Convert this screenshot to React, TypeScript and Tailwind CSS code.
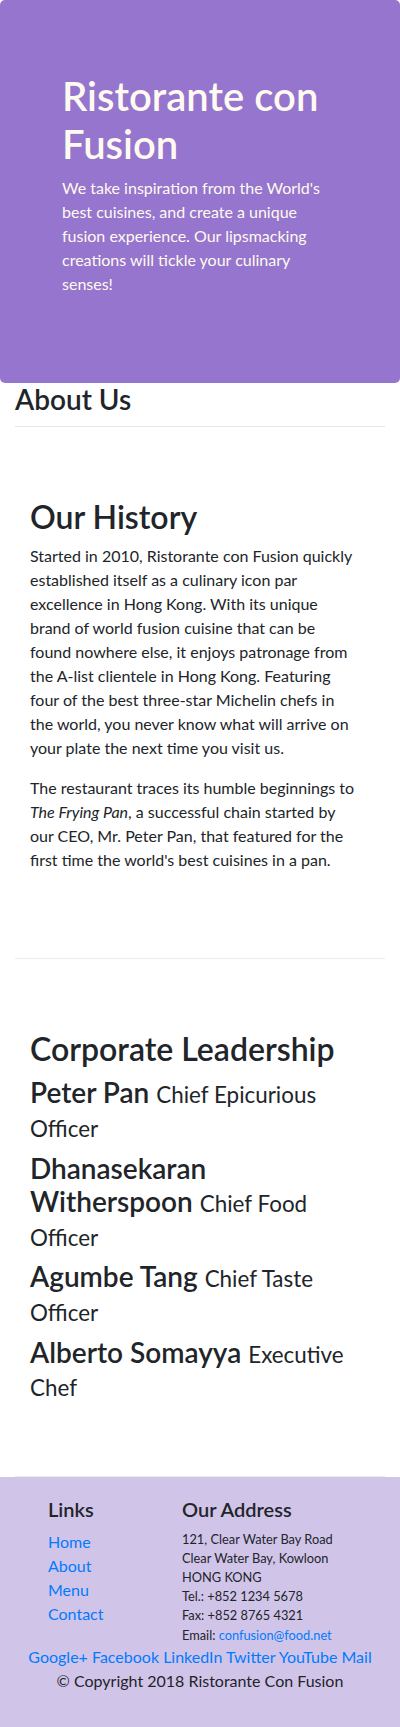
export default function App() {
  const leaders = [
    { name: "Peter Pan", title: "Chief Epicurious Officer" },
    { name: "Dhanasekaran Witherspoon", title: "Chief Food Officer" },
    { name: "Agumbe Tang", title: "Chief Taste Officer" },
    { name: "Alberto Somayya", title: "Executive Chef" },
  ];
  const p1 = [
    "Started in 2010, Ristorante con Fusion quickly",
    "established itself as a culinary icon par",
    "excellence in Hong Kong. With its unique",
    "brand of world fusion cuisine that can be",
    "found nowhere else, it enjoys patronage from",
    "the A-list clientele in Hong Kong. Featuring",
    "four of the best three-star Michelin chefs in",
    "the world, you never know what will arrive on",
    "your plate the next time you visit us.",
  ];
  return (
    <div className="min-h-[1727px] bg-white text-[#212529] text-[16px] leading-[1.5] font-[Lato,'Open_Sans',sans-serif]">
      <header className="bg-[#9575cd] rounded-[5px] pl-[62px] pr-[68px] pt-[72px] pb-[87px] text-[#fffaf0]">
        <h1 className="text-[40px] leading-[1.2] font-semibold mb-2">Ristorante con Fusion</h1>
        <p>
          We take inspiration from the World's best cuisines, and create a unique fusion experience. Our
          lipsmacking creations will tickle your culinary senses!
        </p>
      </header>

      <div className="px-[15px]">
        <h3 className="text-[28px] leading-[1.2] font-semibold mb-[9px]">About Us</h3>
        <div className="h-px bg-[#e6e6e6]" />

        <section className="px-[15px] pt-[71px] pb-[86px] border-b border-[#ececec]">
          <h2 className="text-[32px] leading-[1.2] font-semibold mb-2">Our History</h2>
          <p className="mb-4 whitespace-nowrap">
            {p1.map((line, i) => (
              <span key={i}>
                {line}
                {i < p1.length - 1 && <br />}
              </span>
            ))}
          </p>
          <p className="whitespace-nowrap">
            The restaurant traces its humble beginnings to
            <br />
            <em>The Frying Pan</em>, a successful chain started by
            <br />
            our CEO, Mr. Peter Pan, that featured for the
            <br />
            first time the world's best cuisines in a pan.
          </p>
        </section>

        <section className="px-[15px] pt-[71px] pb-[73px] border-b border-[#ececec]">
          <h2 className="text-[32px] leading-[1.2] font-semibold mb-2">Corporate Leadership</h2>
          <div className="flex flex-col gap-2">
            {leaders.map((l) => (
              <h3 key={l.name} className="text-[28px] leading-[1.2] font-semibold">
                {l.name} <small className="text-[80%] font-normal">{l.title}</small>
              </h3>
            ))}
          </div>
        </section>
      </div>

      <footer className="bg-[#d1c4e9] pt-[20px] pb-[34px]">
        <div className="flex pl-[48px]">
          <div className="w-[134px]">
            <h5 className="text-[20px] leading-[1.2] font-semibold mb-[9px]">Links</h5>
            <ul className="text-[#007bff]">
              <li><a href="#">Home</a></li>
              <li><a href="#">About</a></li>
              <li><a href="#">Menu</a></li>
              <li><a href="#">Contact</a></li>
            </ul>
          </div>
          <div>
            <h5 className="text-[20px] leading-[1.2] font-semibold mb-[9px]">Our Address</h5>
            <address className="not-italic text-[12.8px] leading-[1.5]">
              121, Clear Water Bay Road<br />
              Clear Water Bay, Kowloon<br />
              HONG KONG<br />
              Tel.: +852 1234 5678<br />
              Fax: +852 8765 4321<br />
              Email: <a href="#" className="text-[#007bff]">confusion@food.net</a>
            </address>
          </div>
        </div>
        <div className="text-center text-[#007bff]">
          <a href="#">Google+</a> <a href="#">Facebook</a> <a href="#">LinkedIn</a> <a href="#">Twitter</a>{" "}
          <a href="#">YouTube</a> <a href="#">Mail</a>
        </div>
        <p className="text-center">© Copyright 2018 Ristorante Con Fusion</p>
      </footer>
    </div>
  );
}
